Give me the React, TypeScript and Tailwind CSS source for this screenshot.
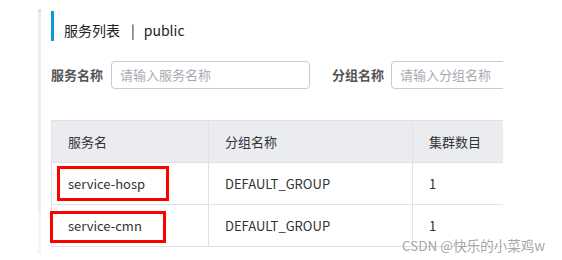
const font = '"Noto Sans CJK SC", "Noto Sans", sans-serif';

const rows = [
  { name: 'service-hosp', group: 'DEFAULT_GROUP', count: 1 },
  { name: 'service-cmn', group: 'DEFAULT_GROUP', count: 1 },
];

const Cell = ({ w, children }: { w: string; children: React.ReactNode }) => (
  <div className={`${w} shrink-0 h-full border-r border-[#dfe1e6] pl-[16px] flex items-center`}>{children}</div>
);

export default function App() {
  return (
    <div className="relative w-[562px] h-[260px] bg-white overflow-hidden flex text-[#333]" style={{ fontFamily: font }}>
      {/* side strip */}
      <div className="ml-[38px] mt-[9px] w-[3px] flex flex-col">
        <div className="h-[3px] bg-[#dcdde0]" />
        <div className="h-[200px] bg-[#eceef3]" />
        <div className="h-[40px] bg-[#f4f5f7]" />
        <div className="h-[1px] bg-[#e6e7ea]" />
      </div>

      <div className="ml-[10px] w-[452px] overflow-hidden">
        <div className="mt-[11px] h-[30px] border-l-[3px] border-[#0b9bd0] pl-[10px] pt-[9px] flex text-[14px] leading-[20px] text-[#222]">
          <span>服务列表</span>
          <span className="ml-[11px]">|</span>
          <span className="ml-[9px]">public</span>
        </div>

        <div className="mt-[20px] flex items-center h-[28px] text-[13px]">
          <span className="w-[60px] shrink-0 font-bold text-[#555]">服务名称</span>
          <div className="w-[199px] h-[28px] shrink-0 rounded-[4px] border border-[#c8cad0] pl-[8px] flex items-center text-[#a8abb2]">
            请输入服务名称
          </div>
          <span className="ml-[22px] w-[59px] shrink-0 font-bold text-[#555]">分组名称</span>
          <div className="w-[199px] h-[28px] shrink-0 rounded-[4px] border border-[#c8cad0] pl-[8px] flex items-center text-[#a8abb2]">
            请输入分组名称
          </div>
        </div>

        <div className="mt-[31px] w-[600px] border-l border-t border-[#dfe1e6] text-[13px]">
          <div className="h-[42px] flex border-b border-[#dfe1e6] bg-[#ebecf0]">
            <Cell w="w-[157px]">服务名</Cell>
            <Cell w="w-[204px]">分组名称</Cell>
            <Cell w="w-[200px]">集群数目</Cell>
          </div>
          {rows.map((r) => (
            <div key={r.name} className="h-[42px] flex border-b border-[#dfe1e6]">
              <Cell w="w-[157px]">{r.name}</Cell>
              <Cell w="w-[204px]">{r.group}</Cell>
              <Cell w="w-[200px]">{r.count}</Cell>
            </div>
          ))}
        </div>
      </div>

      {/* annotation boxes */}
      <div className="absolute left-[57px] top-[166px] w-[112px] h-[35px] border-[3px] border-[#ff0000]" />
      <div className="absolute left-[50px] top-[211px] w-[116px] h-[32px] border-[3px] border-[#ff0000]" />

      {/* watermark */}
      <div className="absolute left-[402px] top-[236px] text-[13.5px] leading-[18px] text-[#9a9a9a]/90">
        CSDN @快乐的小菜鸡w
      </div>
    </div>
  );
}
